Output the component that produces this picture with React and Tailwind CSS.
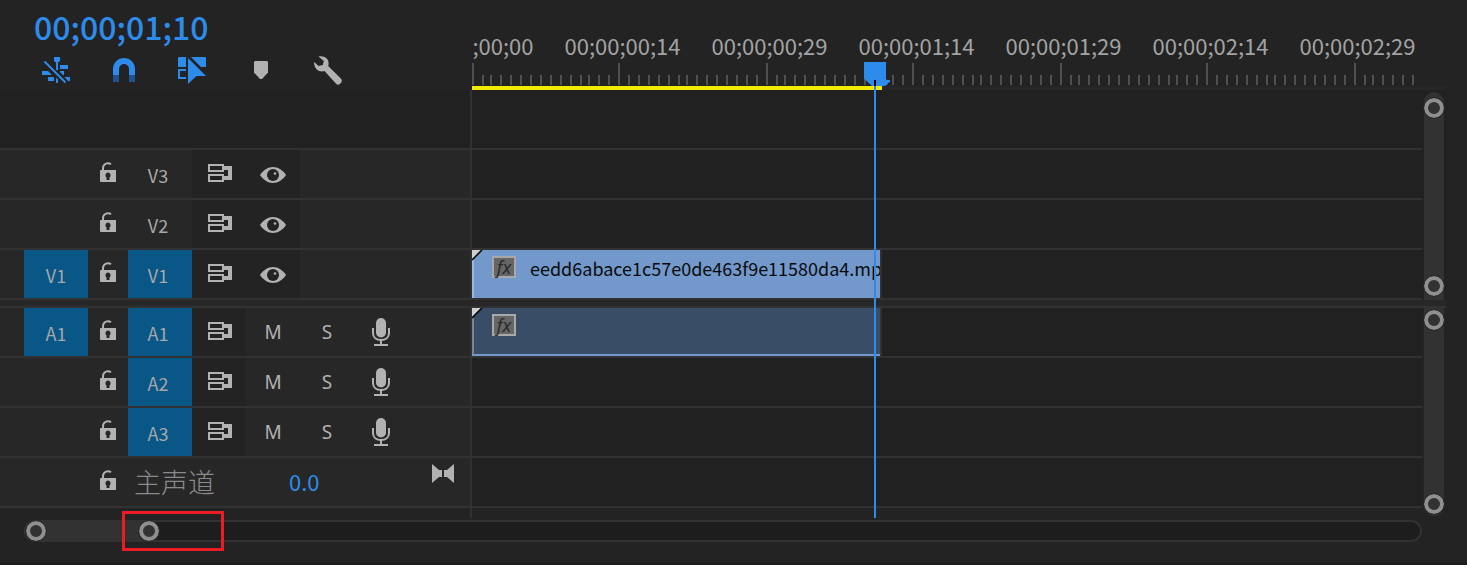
import React from "react";

const LABELS = [
  "00;00;00;00",
  "00;00;00;14",
  "00;00;00;29",
  "00;00;01;14",
  "00;00;01;29",
  "00;00;02;14",
  "00;00;02;29",
];

const TICKS = Array.from({ length: 97 }, (_, k) => ({
  x: 2 * Math.floor((k * 49 + 1) / 10),
  major: k % 15 === 0,
}));

function NestIcon() {
  return (
    <svg width="28" height="26" viewBox="0 0 28 26" fill="#2d8ceb">
      <path d="M12 0h6v4l-2 1.500V13h-2V5.500L12 4z" />
      <path d="M18 8h8v4h-7.500l-.5-.5zM18 14h4v4h-1l-3-3zM22.500 20H28v4h-2zM14 20.500l2 2V26h-2zM6 20h5.500l.5.500V24H6zM0 14h6l4 4H0z" />
      <path d="M2 4l22 22" stroke="#232323" strokeWidth="4" />
      <path d="M2.500 4.500l21 21" stroke="#2d8ceb" strokeWidth="2" />
    </svg>
  );
}

function MagnetIcon() {
  return (
    <svg width="22" height="24" viewBox="0 0 22 24">
      <path d="M3 17v-6a8 8 0 0 1 16 0v6" fill="none" stroke="#2d8ceb" strokeWidth="6" />
      <path d="M0 17h6v7H0zM16 17h6v7h-6z" fill="#1c5491" />
    </svg>
  );
}

function LinkedIcon() {
  return (
    <svg width="28" height="27" viewBox="0 0 28 27" fill="#2d8ceb">
      <path d="M1 0h7v10H0V1zM13 0h14l1 1v9h-5zM10 1l18 18h-9.500L10 27z" />
      <path d="M8 13H1v8h7" fill="none" stroke="#2d8ceb" strokeWidth="2" />
    </svg>
  );
}

function MarkerIcon() {
  return (
    <svg width="16" height="18" viewBox="-2 0 16 18" fill="#b2b2b2">
      <path d="M1 0h12l1 1v10.500L8 18H6l-6-6.500V1z" />
    </svg>
  );
}

function WrenchIcon() {
  return (
    <svg width="28" height="29" viewBox="0 0 28 29" fill="#b2b2b2">
      <path d="M4.500.500C7 -.3 10.500.2 12.700 2.500c2 2 2.300 5 1.500 7.500L27 22.800c1 1 1.200 2.500.2 3.800l-1.300 1.500c-1 1-2.600 1-3.600 0L10.500 15c-2.600.9-5.600.5-7.700-1.500C.600 11.300-.3 8.500.300 6l4.200 4 4.300-1.100 1-3.800z" />
    </svg>
  );
}

function LockIcon() {
  return (
    <svg width="16" height="20" viewBox="0 0 16 20">
      <path d="M3 9V6.500C3 3 5.500 1.300 8 1.300c1.300 0 2.200.3 3 .9" fill="none" stroke="#b2b2b2" strokeWidth="2" />
      <path d="M1 8h15v12H1a1 1 0 0 1-1-1V9a1 1 0 0 1 1-1z" fill="#b2b2b2" />
      <path d="M8 10.500a2.800 2.800 0 0 1 1.500 5V18h-3v-2.500A2.800 2.800 0 0 1 8 10.500z" fill="#262626" />
    </svg>
  );
}

function SyncIcon() {
  return (
    <svg width="24" height="18" viewBox="0 0 24 18">
      <path d="M1 1h14v6H1zM1 11h14v6H1z" fill="none" stroke="#b2b2b2" strokeWidth="2" />
      <path d="M16 2h8v14h-8v-4h4V6h-4z" fill="#b2b2b2" />
    </svg>
  );
}

function EyeIcon() {
  return (
    <svg width="26" height="16" viewBox="0 0 26 16">
      <path d="M0 8c3-4.500 8-8 13-8s10 3.500 13 8c-3 4.500-8 8-13 8S3 12.500 0 8z" fill="#b2b2b2" />
      <circle cx="13" cy="8" r="6" fill="#232323" />
      <circle cx="15" cy="6.500" r="1.300" fill="#b2b2b2" />
    </svg>
  );
}

function MicIcon() {
  return (
    <svg width="18" height="28" viewBox="0 0 18 28">
      <rect x="4" y="0" width="10" height="19.500" rx="5" fill="#b2b2b2" />
      <path d="M1 10v5c0 4.500 3.500 7 8 7s8-2.500 8-7v-5" fill="none" stroke="#b2b2b2" strokeWidth="2" />
      <path d="M8 22h2v4H8zM2 26h14v2H2z" fill="#b2b2b2" />
    </svg>
  );
}

function BowtieIcon() {
  return (
    <svg width="22" height="19" viewBox="0 0 22 19" fill="#b2b2b2">
      <path d="M0 0l7 6h3v7H7l-7 6zM22 0l-7 6h-3v7h3l7 6z" />
    </svg>
  );
}

function Ring({ label }) {
  return (
    <button
      aria-label={label}
      className="size-5 shrink-0 rounded-full border-4 border-[#8f8f8f] bg-[#323232] outline-1 outline-[#2a2a2a]"
    />
  );
}

const BTN = "flex w-[54px] items-center justify-center";
const LINE = "border-[#323232]";

function TrackHeader({ name, source, targeted, audio }) {
  return (
    <div className={"flex h-12 w-[472px] shrink-0 border-r-2 bg-[#272727] pl-6 text-[18px] leading-6 text-[#a8a8a8] " + LINE}>
      <button
        aria-label={"Source patch " + name}
        className={"w-16 pt-0.5 " + (source ? "bg-[#085787]" : "")}
      >
        {source ? name : ""}
      </button>
      <button aria-label={"Lock " + name} className="flex w-10 items-center justify-center pb-1">
        <LockIcon />
      </button>
      <button className={"w-16 pt-0.5 pr-1 " + (targeted ? "bg-[#085787]" : "")}>{name}</button>
      <button aria-label={"Sync lock " + name} className={BTN + " bg-[#232323] pb-0.5 pl-0.5"}>
        <SyncIcon />
      </button>
      {audio ? (
        <>
          <button className={BTN + " font-['Noto_Sans'] text-[19px] text-[#b2b2b2]"} title="Mute">M</button>
          <button className={BTN + " font-['Noto_Sans'] text-[19px] text-[#b2b2b2]"} title="Solo">S</button>
          <button aria-label={"Record " + name} className={BTN}>
            <MicIcon />
          </button>
        </>
      ) : (
        <button aria-label={"Toggle output " + name} className={BTN + " bg-[#232323] pt-0.5"}>
          <EyeIcon />
        </button>
      )}
    </div>
  );
}

function Clip({ name, audio }) {
  return (
    <div className={"relative flex h-12 w-[410px] items-start overflow-hidden border-r-2 border-[#323232] pl-5 " + (audio ? "bg-[#3a4d66]" : "bg-[#7399cc]")}>
      <svg className="absolute top-0 left-0" width="12" height="48" viewBox="0 0 12 48">
        <path d="M0 10h2v38H0z" fill={audio ? "#7c8796" : "#9db8dc"} />
        <path d="M0 0h9L0 9z" fill="#cfcfcf" />
        <path d="M0 10L10 0" stroke="#000" strokeWidth="1.500" />
      </svg>
      {audio && <div className="absolute inset-x-0 bottom-0 h-0.5 bg-[#7399cc]" />}
      <span className="mt-1.5 flex h-[22px] w-6 shrink-0 items-center justify-center border-2 border-[#a8a8a8] bg-[#666666] font-['Noto_Sans'] text-[18px] leading-[18px] text-[#2a2a2a] italic">
        fx
      </span>
      <span className="mt-1.5 ml-3.5 text-[18px] leading-6 whitespace-nowrap text-[#0b0b0b]">{name}</span>
    </div>
  );
}

function Row({ children, clip }) {
  return (
    <div className={"flex border-b-2 " + LINE}>
      {children}
      <div className="min-w-0 flex-1 bg-[#212121]">{clip}</div>
    </div>
  );
}

function Ruler() {
  return (
    <div className="min-w-0 flex-1">
      <div className="flex h-[63px] overflow-hidden pt-[33px]">
        {LABELS.map((t, i) => (
          <span
            key={t}
            className={"w-[147px] shrink-0 text-center text-[22px] leading-6 text-[#a3a3a3] " + (i === 0 ? "-ml-[70px]" : "")}
          >
            {t}
          </span>
        ))}
      </div>
      <svg className="block w-full" height="23" fill="#505050">
        {TICKS.map((t) => (
          <rect key={t.x} x={t.x} y={t.major ? 0 : 12} width="2" height={t.major ? 22 : 10} />
        ))}
      </svg>
      <div className="h-1 bg-[#272727]">
        <div className="h-1 w-[410px] bg-[#f2eb00]" />
      </div>
    </div>
  );
}

const TOOLS = [
  ["Insert as nest", NestIcon],
  ["Snap", MagnetIcon],
  ["Linked selection", LinkedIcon],
  ["Add marker", MarkerIcon],
  ["Timeline settings", WrenchIcon],
];

export default function App() {
  return (
    <main className="flex min-h-screen flex-col border-b-2 border-[#1b1b1b] bg-[#232323] font-['Noto_Sans_CJK_SC',sans-serif]">
      <div className="flex">
        <div className="relative min-w-0 flex-1">
          <div className="flex">
            <div className="h-[90px] w-[472px] shrink-0">
              <div className="pt-2 pb-0.5 pl-[34px] text-[32px] leading-9 font-medium text-[#2d8ceb]">00;00;01;10</div>
              <div className="flex pl-[22px]">
                {TOOLS.map(([label, Icon]) => (
                  <button key={label} aria-label={label} className="flex h-12 w-[68px] items-center justify-center">
                    <Icon />
                  </button>
                ))}
              </div>
            </div>
            <Ruler />
          </div>

          <Row>
            <div className={"h-[58px] w-[472px] shrink-0 border-r-2 bg-[#212121] " + LINE} />
          </Row>
          <Row>
            <TrackHeader name="V3" />
          </Row>
          <Row>
            <TrackHeader name="V2" />
          </Row>
          <Row clip={<Clip name="eedd6abace1c57e0de463f9e11580da4.mp" />}>
            <TrackHeader name="V1" source targeted />
          </Row>
          <div className={"h-2 border-b-2 bg-[#272727] " + LINE} />
          <Row clip={<Clip audio />}>
            <TrackHeader name="A1" source targeted audio />
          </Row>
          <Row>
            <TrackHeader name="A2" targeted audio />
          </Row>
          <Row>
            <TrackHeader name="A3" targeted audio />
          </Row>
          <Row>
            <div className={"flex h-12 w-[472px] shrink-0 items-center border-r-2 bg-[#272727] pr-4 pl-[88px] " + LINE}>
              <button aria-label="Lock master" className="flex w-10 items-center justify-center pb-1">
                <LockIcon />
              </button>
              <span className="w-[161px] pl-1.5 text-[27px] leading-8 font-light text-[#8a8a8a]">主声道</span>
              <button className="pb-0.5 text-[22px] leading-6 text-[#2d8ceb]">0.0</button>
              <button aria-label="Fit tracks" className="ml-auto self-start pt-1.5">
                <BowtieIcon />
              </button>
            </div>
          </Row>
          <div className={"h-2.5 w-[472px] border-r-2 " + LINE} />

          <div className="absolute top-[62px] bottom-0 left-[864px] w-[26px]">
            <div className="ml-2.5 h-full w-0.5 bg-[#2d8ceb]" />
            <svg className="absolute top-0 left-0" width="26" height="28" viewBox="0 0 26 28">
              <path d="M0 0h22v17l1 1h3v2l-2 1-1 2-3 1H8L0 16.500z" fill="#2d8ceb" />
              <path d="M10 18h2v6h-2z" fill="#000" />
            </svg>
          </div>
        </div>

        <div className="flex w-[45px] shrink-0 flex-col pt-[86px]">
          <div className="h-1 w-6 bg-[#272727]" />
          <div className="flex h-[210px] w-6 flex-col bg-[#212121] px-0.5 pt-0.5">
            <div className="flex flex-1 flex-col items-center justify-between rounded-t-full bg-[#323232] pt-1.5 pb-1">
              <Ring label="Video zoom top" />
              <Ring label="Video zoom bottom" />
            </div>
          </div>
          <div className={"h-2 w-6 border-b-2 bg-[#272727] " + LINE} />
          <div className="flex h-[210px] w-6 flex-col px-0.5">
            <div className="flex h-[208px] flex-col items-center justify-between rounded-b-full bg-[#323232] pt-0.5 pb-0.5">
              <Ring label="Audio zoom top" />
              <Ring label="Audio zoom bottom" />
            </div>
          </div>
        </div>
      </div>

      <div className="relative mt-0.5 mr-[45px] ml-6">
        <div className={"h-[22px] rounded-full border-2 bg-[#1d1d1d] " + LINE} />
        <div className="absolute top-0 left-0 flex h-[22px] w-[135px] items-center justify-between rounded-full bg-[#323232] pl-0.5">
          <Ring label="Horizontal zoom start" />
          <Ring label="Horizontal zoom end" />
        </div>
        <div className="absolute -top-[9px] left-[98px] h-10 w-[102px] border-3 border-[#ed1c24]" />
      </div>
    </main>
  );
}
